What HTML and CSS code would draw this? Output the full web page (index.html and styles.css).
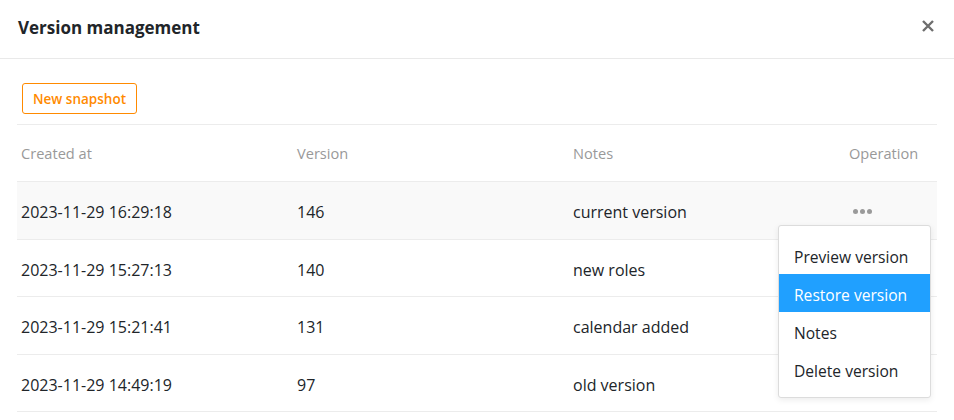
FILE: index.html
```html
<!DOCTYPE html>
<html>
<head>
<meta charset="utf-8">
<link rel="stylesheet" href="styles.css">
</head>
<body>
<div class="dialog">
  <div class="header">
    <h1 class="title">Version management</h1>
    <svg class="close" width="12" height="12" viewBox="0 0 12 12"><path d="M1 1L11 11M11 1L1 11" stroke="#6e6e6e" stroke-width="2.4" stroke-linecap="butt"/></svg>
  </div>
  <div class="content">
    <div class="toolbar">
      <button class="btn-snapshot">New snapshot</button>
    </div>
    <div class="table">
      <div class="row head">
        <div class="cell">Created at</div>
        <div class="cell">Version</div>
        <div class="cell">Notes</div>
        <div class="cell">Operation</div>
      </div>
      <div class="row active">
        <div class="cell">2023-11-29 16:29:18</div>
        <div class="cell">146</div>
        <div class="cell">current version</div>
        <div class="cell op">
          <span class="dots"><i></i><i></i><i></i></span>
          <div class="menu">
            <div class="menu-item">Preview version</div>
            <div class="menu-item selected">Restore version</div>
            <div class="menu-item">Notes</div>
            <div class="menu-item">Delete version</div>
          </div>
        </div>
      </div>
      <div class="row">
        <div class="cell">2023-11-29 15:27:13</div>
        <div class="cell">140</div>
        <div class="cell">new roles</div>
        <div class="cell"></div>
      </div>
      <div class="row">
        <div class="cell">2023-11-29 15:21:41</div>
        <div class="cell">131</div>
        <div class="cell">calendar added</div>
        <div class="cell"></div>
      </div>
      <div class="row">
        <div class="cell">2023-11-29 14:49:19</div>
        <div class="cell">97</div>
        <div class="cell">old version</div>
        <div class="cell"></div>
      </div>
    </div>
  </div>
</div>
</body>
</html>
```
FILE: styles.css
```css
* { box-sizing: border-box; }
html, body { margin: 0; padding: 0; background: #fff; }
body {
  font-family: "Open Sans", "Noto Sans", sans-serif;
  color: #212529;
  font-size: 16px;
}
.dialog { width: 954px; height: 420px; overflow: hidden; }
.header {
  height: 59px;
  border-bottom: 1px solid #e9e9e9;
  display: flex;
  align-items: center;
  justify-content: space-between;
  padding: 0 20px 0 18px;
}
.title {
  margin: 0;
  font-size: 17px;
  font-weight: 700;
  color: #212529;
  margin-top: -4px;
}
.close { display: block; margin-top: -6px; }
.content { padding: 0 17px; }
.toolbar {
  padding: 24px 0 10px 5px;
  border-bottom: 1px solid #ececec;
}
.btn-snapshot {
  font-family: inherit;
  height: 31px;
  padding: 0 10px;
  background: #fff;
  border: 1px solid #ff8a00;
  border-radius: 3px;
  color: #ff8a00;
  font-size: 13.5px;
  font-weight: 600;
}
.row {
  display: grid;
  grid-template-columns: 276px 276px 276px 1fr;
  height: 57.5px;
  border-bottom: 1px solid #ececec;
  align-items: center;
}
.row.head { color: #999; font-size: 14.6px; height: 57px; }
.row.active { background: #f9f9f9; }
.cell { padding: 0 4px; white-space: nowrap; }
.row:not(.head) .cell { padding-top: 4px; }
.op { position: relative; }
.dots { display: flex; gap: 2px; padding-left: 4px; margin-top: -2px; }
.dots i { width: 5px; height: 5px; border-radius: 50%; background: #9a9a9a; display: block; }
.menu {
  position: absolute;
  left: -67px;
  top: 18px;
  width: 153px;
  background: #fff;
  border: 1px solid #dcdcdc;
  border-radius: 3px;
  box-shadow: 0 2px 6px rgba(0,0,0,0.08);
  padding: 10px 0 9px;
  z-index: 2;
}
.menu-item {
  height: 38px;
  line-height: 34px;
  padding: 4px 15px 0;
  font-size: 15.6px;
  color: #212529;
}
.menu-item.selected { background: #20a0ff; color: #fff; }
```
